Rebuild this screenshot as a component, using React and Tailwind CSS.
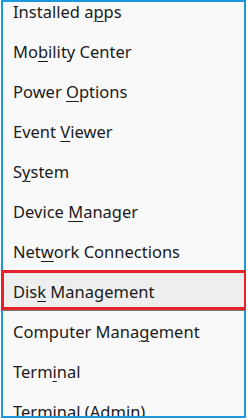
import React from "react";

const items = [
  ["Installed a", "p", "ps"],
  ["Mo", "b", "ility Center"],
  ["Power ", "O", "ptions"],
  ["Event ", "V", "iewer"],
  ["S", "y", "stem"],
  ["Device ", "M", "anager"],
  ["Net", "w", "ork Connections"],
  ["Dis", "k", " Management"],
  ["Computer Mana", "g", "ement"],
  ["Term", "i", "nal"],
  ["Terminal (", "A", "dmin)"],
];

const Label = ({ parts }) => (
  <span>
    {parts[0]}
    <span className="underline underline-offset-[3px] decoration-1">{parts[1]}</span>
    {parts[2]}
  </span>
);

export default function App() {
  return (
    <div className="w-[248px] h-[418px] bg-white overflow-hidden pl-px">
      <div
        className="relative w-[245px] h-[418px] bg-[#f9f9f9] overflow-hidden text-[#1b1b1b] text-[16.5px]"
        style={{ fontFamily: '"Noto Sans", sans-serif' }}
      >
        <div className="-mt-[10px]">
          {items.map((parts, i) =>
            i === 7 ? (
              <div key={i} className="relative h-10">
                <div className="absolute left-0 -right-px top-0 bottom-0 z-20 bg-[#eeeeee] border-[3px] border-[#e8202a] shadow-[0_1px_0_#777] flex items-center pl-[9px] pt-[5px]">
                  <Label parts={parts} />
                </div>
              </div>
            ) : (
              <div key={i} className="h-10 flex items-center pl-[12px] pt-[5px]">
                <Label parts={parts} />
              </div>
            )
          )}
        </div>
        <div className="absolute inset-0 z-10 border-2 border-[#1e98dc] pointer-events-none" />
      </div>
    </div>
  );
}
